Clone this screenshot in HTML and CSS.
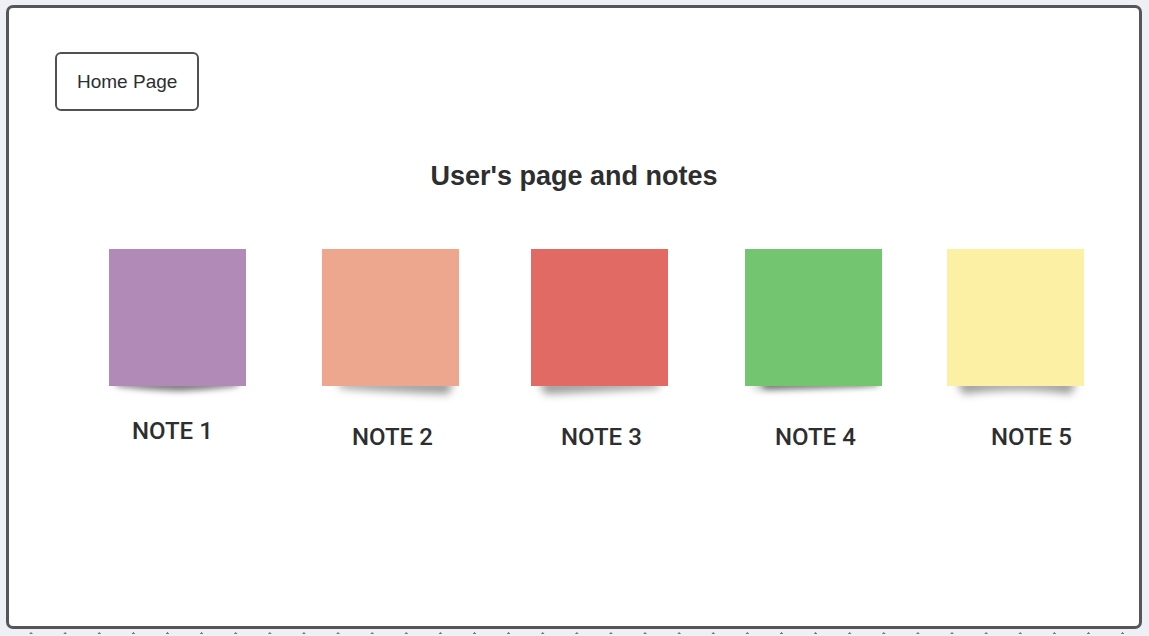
FILE: index.html
```html
<!DOCTYPE html>
<html lang="en">
<head>
<meta charset="utf-8">
<meta name="viewport" content="width=device-width, initial-scale=1">
<title>User's page and notes</title>
<link rel="stylesheet" href="styles.css">
</head>
<body>
<main class="frame">
  <nav><button class="home" type="button">Home Page</button></nav>
  <h1 class="title">User's page and notes</h1>
  <section class="notes" aria-label="Notes">
    <figure class="note purple">
      <div class="paper"></div>
      <svg class="shadow" viewBox="0 0 137 24" preserveAspectRatio="none" aria-hidden="true"><path d="M5-5H131L128 0Q98 4 70 5Q38 4 8 0Z"/></svg>
      <figcaption class="label raised">NOTE 1</figcaption>
    </figure>
    <figure class="note peach">
      <div class="paper"></div>
      <svg class="shadow soft" viewBox="0 0 137 24" preserveAspectRatio="none" aria-hidden="true"><path d="M14-5H131L127 8Q75 6 20 2Z"/></svg>
      <figcaption class="label">NOTE 2</figcaption>
    </figure>
    <figure class="note red">
      <div class="paper"></div>
      <svg class="shadow soft" viewBox="0 0 137 24" preserveAspectRatio="none" aria-hidden="true"><path d="M8-5H130L126 2Q72 5 14 8Z"/></svg>
      <figcaption class="label">NOTE 3</figcaption>
    </figure>
    <figure class="note green">
      <div class="paper"></div>
      <svg class="shadow" viewBox="0 0 137 24" preserveAspectRatio="none" aria-hidden="true"><path d="M14-5H134L132 0Q72 1 20 3Z"/><path class="faint" d="M5-5H120V1Q60 6 10 6Z"/></svg>
      <figcaption class="label">NOTE 4</figcaption>
    </figure>
    <figure class="note yellow">
      <div class="paper"></div>
      <svg class="shadow soft" viewBox="0 0 137 24" preserveAspectRatio="none" aria-hidden="true"><path d="M10-5H129L124 8Q70 0 16 8Z"/></svg>
      <figcaption class="label shifted">NOTE 5</figcaption>
    </figure>
  </section>
</main>
<div class="dots"></div>
</body>
</html>
```
FILE: styles.css
```css
* {
  box-sizing: border-box;
}

body {
  margin: 0;
  min-height: 100vh;
  display: flex;
  flex-direction: column;
  background: #eff0f5;
  color: #2d2e2f;
  font-family: "Liberation Sans", Arial, sans-serif;
}

.frame {
  flex: 1;
  margin: 5px 7px 0 6px;
  padding: 44px 55px 40px 46px;
  border: 3px solid #555657;
  border-radius: 7px;
  background: #fff;
}

.home {
  display: block;
  padding: 16px 20px;
  border: 2px solid #505152;
  border-radius: 6px;
  background: #fff;
  color: inherit;
  font: 19px/23px "Liberation Sans", Arial, sans-serif;
}

.title {
  margin: 49px 0 57px;
  padding-left: 9px;
  font-size: 27px;
  line-height: 32px;
  text-align: center;
}

/* Each track holds one note and the space to its right. */
.notes {
  display: grid;
  grid-template-columns: 213fr 209fr 214fr 202fr 137fr;
  padding-left: 54px;
}

.note {
  margin: 0;
  width: 137px;
}

.paper {
  aspect-ratio: 1;
  background: var(--paper);
}

.purple { --paper: #b28ab7; }
.peach { --paper: #eda78e; }
.red { --paper: #e16a65; }
.green { --paper: #73c56f; }
.yellow { --paper: #fcf0a4; }

.shadow {
  display: block;
  width: 100%;
  height: 24px;
  overflow: hidden;
  fill: #0008;
}

.shadow path {
  filter: blur(3px);
}

.shadow.soft {
  fill: #0006;
}

.shadow.soft path {
  filter: blur(4px);
}

.shadow .faint {
  fill: #0002;
}

.label {
  margin-top: 12px;
  padding-left: 30px;
  font: 500 24px/30px Roboto, sans-serif;
  white-space: nowrap;
}

.label.raised {
  margin-top: 6px;
  padding-left: 23px;
}

.label.shifted {
  padding-left: 44px;
}

.dots {
  height: 7px;
  margin: 0 9px 0 14px;
  background: radial-gradient(circle, #77787c 0 1px, transparent 1px) 0 0 / 34px 9px round no-repeat;
}
```
